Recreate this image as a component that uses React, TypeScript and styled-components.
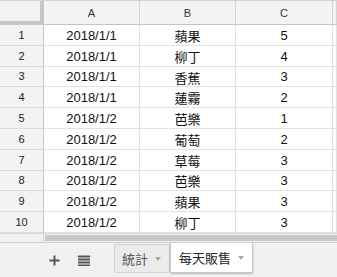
import React from "react";
import styled, { createGlobalStyle } from "styled-components";

const GlobalStyle = createGlobalStyle`
  html, body {
    margin: 0;
    padding: 0;
    background: #ffffff;
  }
  body {
    font-family: "Liberation Sans", Arial, "Noto Sans CJK TC", sans-serif;
  }
`;

const rows = [
  ["2018/1/1", "蘋果", "5"],
  ["2018/1/1", "柳丁", "4"],
  ["2018/1/1", "香蕉", "3"],
  ["2018/1/1", "蓮霧", "2"],
  ["2018/1/2", "芭樂", "1"],
  ["2018/1/2", "葡萄", "2"],
  ["2018/1/2", "草莓", "3"],
  ["2018/1/2", "芭樂", "3"],
  ["2018/1/2", "蘋果", "3"],
  ["2018/1/2", "柳丁", "3"],
];

const Frame = styled.div`
  width: 337px;
  height: 277px;
  overflow: hidden;
  display: flex;
  flex-direction: column;
  background: #f1f1f1;
`;

const Sheet = styled.div`
  display: grid;
  grid-template-columns: 44px 96px 96px 97px 1fr;
  grid-template-rows: 24px repeat(10, 20.8px);
  background: #ffffff;
  border-top: 1px solid #d4d4d4;
  box-sizing: border-box;
`;

const Corner = styled.div`
  background: #f3f3f3;
  border-right: 4px solid #c6c6c6;
  border-bottom: 4px solid #c6c6c6;
  box-sizing: border-box;
`;

const ColHead = styled.div`
  background: #f3f3f3;
  border-right: 1px solid #d6d6d6;
  border-bottom: 1px solid #c4c4c4;
  box-sizing: border-box;
  display: flex;
  align-items: center;
  justify-content: center;
  font-size: 11px;
  color: #333333;
  padding-top: 1px;
`;

const RowHead = styled.div`
  background: #f3f3f3;
  border-right: 1px solid #c4c4c4;
  border-bottom: 1px solid #dadada;
  box-sizing: border-box;
  display: flex;
  align-items: center;
  justify-content: center;
  font-size: 11px;
  color: #222222;
`;

const Cell = styled.div<{ $cjk?: boolean }>`
  border-right: 1px solid #e2e2e2;
  border-bottom: 1px solid #e2e2e2;
  box-sizing: border-box;
  display: flex;
  align-items: center;
  justify-content: center;
  padding-top: 1px;
  font-size: 13px;
  font-family: ${(p) =>
    p.$cjk
      ? '"Noto Sans CJK TC", "Liberation Sans", sans-serif'
      : '"Liberation Sans", Arial, sans-serif'};
  color: #111111;
  white-space: nowrap;
`;

const ScrollRow = styled.div`
  display: grid;
  grid-template-columns: 44px 1fr;
  height: 11px;
  border-top: 1px solid #d8d8d8;
  border-bottom: 1px solid #d0d0d0;
`;

const ScrollCorner = styled.div`
  background: #f1f1f1;
  border-right: 1px solid #d0d0d0;
`;

const Thumb = styled.div`
  background: #c8c8c8;
  margin: 1px 0 1px 1px;
`;

const TabBar = styled.div`
  flex: 1;
  display: flex;
  align-items: flex-start;
  background: #f1f1f1;
`;

const IconButton = styled.div<{ $left: number }>`
  width: 24px;
  height: 34px;
  margin-left: ${(p) => p.$left}px;
  display: flex;
  align-items: center;
  justify-content: center;
`;

const Tabs = styled.div`
  display: flex;
  margin-left: 18px;
`;

const Tab = styled.div<{ $active?: boolean }>`
  display: flex;
  align-items: center;
  box-sizing: border-box;
  height: ${(p) => (p.$active ? "30px" : "29px")};
  margin-top: ${(p) => (p.$active ? "0" : "1px")};
  padding: 0 8px 0 ${(p) => (p.$active ? "8px" : "7px")};
  background: ${(p) => (p.$active ? "#ffffff" : "#ebebeb")};
  border: 1px solid ${(p) => (p.$active ? "#c8c8c8" : "#d2d2d2")};
  border-top: ${(p) => (p.$active ? "none" : "1px solid #d2d2d2")};
  border-radius: 0 0 2px 2px;
  box-shadow: ${(p) => (p.$active ? "0 1px 2px rgba(0,0,0,0.25)" : "none")};
  font-family: "Noto Sans CJK TC", "Liberation Sans", sans-serif;
  font-size: 13px;
  color: ${(p) => (p.$active ? "#222222" : "#555555")};
  gap: 7px;
`;

const Caret = styled.span`
  width: 0;
  height: 0;
  border-left: 3px solid transparent;
  border-right: 3px solid transparent;
  border-top: 4px solid #a8a8a8;
  margin-top: 1px;
`;

export default function App() {
  return (
    <>
      <GlobalStyle />
      <Frame>
        <Sheet>
          <Corner />
          <ColHead>A</ColHead>
          <ColHead>B</ColHead>
          <ColHead>C</ColHead>
          <ColHead />
          {rows.map((r, i) => (
            <React.Fragment key={i}>
              <RowHead>{i + 1}</RowHead>
              <Cell>{r[0]}</Cell>
              <Cell $cjk>{r[1]}</Cell>
              <Cell>{r[2]}</Cell>
              <Cell />
            </React.Fragment>
          ))}
        </Sheet>
        <ScrollRow>
          <ScrollCorner />
          <Thumb />
        </ScrollRow>
        <TabBar>
          <IconButton $left={42}>
            <svg width="11" height="11" viewBox="0 0 11 11">
              <path d="M5.5 0.5v10M0.5 5.5h10" stroke="#555" strokeWidth="2" />
            </svg>
          </IconButton>
          <IconButton $left={6}>
            <svg width="12" height="11" viewBox="0 0 12 11">
              <rect x="0" y="0.5" width="12" height="2" fill="#555" />
              <rect x="0" y="3.5" width="12" height="2" fill="#555" />
              <rect x="0" y="6.5" width="12" height="2" fill="#555" />
              <rect x="0" y="9.5" width="12" height="1.5" fill="#555" />
            </svg>
          </IconButton>
          <Tabs>
            <Tab>
              統計
              <Caret />
            </Tab>
            <Tab $active>
              每天販售
              <Caret />
            </Tab>
          </Tabs>
        </TabBar>
      </Frame>
    </>
  );
}
